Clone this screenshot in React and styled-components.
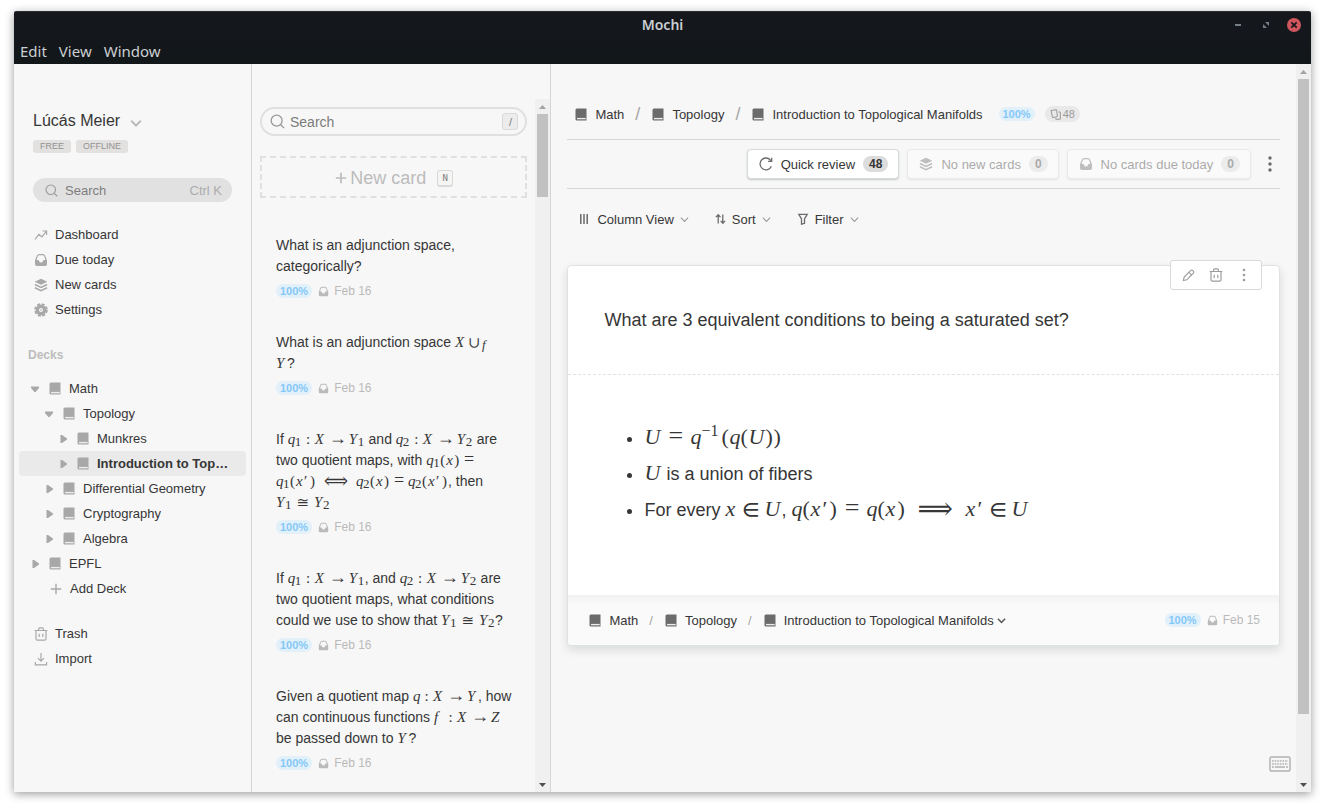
import React, { useState } from 'react';
import styled, { createGlobalStyle, css } from 'styled-components';

const color = {
	bg: '#f7f7f7',
	text: '#363636',
	icon: '#a8a8a8',
	iconDark: '#6b6b6b',
	muted: '#bababa',
	line: '#d6d6d6',
	badge: '#e1e1e1',
	blue: '#85c8f8',
	blueBg: '#e2f0fa',
};

/* ---------- icons ---------- */

const Svg = ({ size = 14, w, h, box = '0 0 14 14', children, ...rest }) => (
	<Icon
		width={w || size}
		height={h || size}
		viewBox={box}
		fill="none"
		stroke="currentColor"
		strokeWidth="1.2"
		aria-hidden="true"
		{...rest}
	>
		{children}
	</Icon>
);

const SearchIcon = ({ size }) => (
	<Svg size={size}>
		<circle cx="6.2" cy="6.2" r="5.1" />
		<path d="M10 10l3.2 3.2" />
	</Svg>
);

const ChevronIcon = ({ w = 9, weight = 1.2 }) => (
	<Svg w={w} h={w} box="0 0 10 10" strokeWidth={weight}>
		<path d="M1 3l4 4.2L9 3" />
	</Svg>
);

const TrendIcon = () => (
	<Svg>
		<path d="M1 11.4L5 6.4l2.9 2.4 4.6-5.6M8.6 3h4v4" />
	</Svg>
);

const InboxIcon = ({ size }) => (
	<Svg size={size} stroke="none" fill="currentColor">
		<path
			fillRule="evenodd"
			d="M1 7.2l1.9-4.7Q3.500 1 5.100 1h3.800q1.600 0 2.200 1.500L13 7.200v4.100q0 1.700-1.700 1.700H2.700Q1 13 1 11.300zM5 2.200q-.8 0-1.100.8L2.600 7h1.600q.6 0 .8.900.4 1.500 2 1.500t2-1.500q.2-.9.800-.9h1.600l-1.300-4q-.3-.8-1.100-.8z"
		/>
	</Svg>
);

const LayersIcon = () => (
	<Svg>
		<path d="M7 .8l6.3 3-6.3 3-6.3-3z" fill="currentColor" stroke="none" />
		<path d="M.9 6.500L7 9.400l6.100-2.900M.9 9.700L7 12.600l6.100-2.900" strokeWidth="1.5" />
	</Svg>
);

const GearIcon = () => (
	<Svg>
		<circle cx="7" cy="7" r="3.7" strokeWidth="3.4" />
		<circle cx="7" cy="7" r="6" strokeWidth="1.6" strokeDasharray="3.1 1.61" />
		<circle cx="7" cy="7" r=".8" fill="currentColor" stroke="none" />
	</Svg>
);

const BookIcon = () => (
	<Svg w={12} h={13} box="0 0 12 13" stroke="none">
		<path d="M2.500.5h9v12h-9C1.300 12.500.5 12 .5 11V2C.5 1 1.300.5 2.500.5z" fill="currentColor" />
		<path d="M2 9.900h8.700v1.400H2z" fill="#ececec" />
	</Svg>
);

const CaretIcon = ({ open }) => (
	<Svg w={10} h={10} box="0 0 10 10" stroke="none">
		<path
			d={open ? 'M1 2.500h8v1.500L5.600 8H4.400L1 4z' : 'M2.500 1H4l5 3.400v1.200L4 9H2.500z'}
			fill="currentColor"
		/>
	</Svg>
);

const PlusIcon = ({ size = 12, weight = 1.4 }) => (
	<Svg size={size} box="0 0 12 12" strokeWidth={weight}>
		<path d="M6 .8v10.400M.8 6h10.400" />
	</Svg>
);

const TrashIcon = ({ size }) => (
	<Svg size={size}>
		<path d="M.6 3.500h12.800M4.600 3.300V2.200c0-.8.500-1.300 1.200-1.300h2.400c.7 0 1.200.5 1.200 1.300v1.100M2 3.700v8c0 .9.500 1.500 1.400 1.500h7.200c.9 0 1.400-.6 1.400-1.500v-8" />
		<path d="M5.200 6.800V10M8.800 6.800V10" />
	</Svg>
);

const ImportIcon = () => (
	<Svg>
		<path d="M1.400 10v2.800h11.200V10M7 1v8M4 6.200l3 3 3-3" />
	</Svg>
);

const ReloadIcon = () => (
	<Svg strokeWidth="1.3">
		<path d="M12.400 9.200A5.900 5.900 0 1 1 11.800 3.500M12.700.8v3.500H9.100" />
	</Svg>
);

const ColumnsIcon = () => (
	<Svg w={12} h={12} box="0 0 12 12" strokeWidth="1.5">
		<path d="M1.800 1v10M5 1v10M8.200 1v10" />
	</Svg>
);

const SortIcon = () => (
	<Svg w={11} h={12} box="0 0 12 12" strokeWidth="1.4">
		<path d="M3.500 11V1.500M1 4l2.500-2.700L6 4M8.500 1v9.500M6.200 8l2.400 2.700L11 8" />
	</Svg>
);

const FilterIcon = () => (
	<Svg w={12} h={12} box="0 0 12 12" strokeWidth="1.3">
		<path d="M1.800 1.300h8.400L7.500 6v4.300l-3 .9V6z" />
	</Svg>
);

const PencilIcon = () => (
	<Svg size={13}>
		<path d="M1.500 12.500l.8-3.800 6.900-7c.8-.8 1.600-.8 2.400 0l.5.500c.8.8.8 1.600 0 2.400l-7 7.100zM7.500 3.700l2.700 2.700-2.200 2" />
	</Svg>
);

const DotsIcon = ({ h = 16, r = 1.7 }) => (
	<Svg w={6} h={h} box={`0 0 6 ${h}`} stroke="none" fill="currentColor">
		<circle cx="3" cy="2" r={r} />
		<circle cx="3" cy={h / 2} r={r} />
		<circle cx="3" cy={h - 2} r={r} />
	</Svg>
);

const CardsIcon = () => (
	<Svg w={11} h={11} box="0 0 12 12" strokeWidth="1.1">
		<path d="M1.200 1.700L6.500.9q.7 0 .8.6l.7 6.200q0 .7-.6.8l-4 .700q-.7 0-.8-.6zM9.200 3.200h1.500q.6 0 .6.6v6.800q0 .6-.6.6H7q-.6 0-.6-.6v-.8" />
	</Svg>
);

const KeyboardIcon = () => (
	<Svg w={22} h={16} box="0 0 22 16" strokeWidth="1.5">
		<rect x="1" y="1" width="20" height="14" rx="1.8" />
		<path d="M3 5h16M3 8h16" strokeDasharray="1.7 .9" />
		<path d="M3 11h2M6 11h10M17 11h2" />
	</Svg>
);

/* ---------- math ---------- */

const advance = {
	sm: { q: 7, x: 8, f: 10, X: 12, Y: 9, Z: 10, ':': 13, '=': 18, '→': 22, '≅': 22, '∪': 15, '⟺': 40, '(': 6, ')': 6, '′': 6, '_': 7 },
	lg: { q: 11, x: 12, U: 17, '=': 29, '∈': 27, '⟹': 60, '(': 8, ')': 8, '′': 7, '^': 20 },
};
const relations = [':', '=', '→', '≅', '∪', '∈', '⟺', '⟹'];
const longRelations = ['=', '→', '⟺', '⟹'];

const Formula = ({ size = 'sm', tex }) => {
	const tokens = tex.split(' ');
	return (
		<Math $size={size}>
			{tokens.map((token, i) => {
				const script = token.length > 1 && (token[0] === '_' || token[0] === '^');
				if (script) {
					return (
						<Script key={i} $size={size} $up={token[0] === '^'} $w={advance[size][token[0]]}>
							{/[a-z]/.test(token[1]) ? <i>{token.slice(1)}</i> : token.slice(1)}
						</Script>
					);
				}
				const Part = longRelations.includes(token) ? LongGlyph : Glyph;
				const alone = token === 'Y' && !(tokens[i + 1] || '').startsWith('_');
				return (
					<Part
						key={i}
						$size={size}
						$w={advance[size][token] + (alone ? 2 : 0)}
						$italic={/[a-z]/i.test(token)}
						$center={relations.includes(token)}
					>
						{token}
					</Part>
				);
			})}
		</Math>
	);
};

/* ---------- shared parts ---------- */

const DueMeta = ({ date }) => (
	<Meta>
		<Percent>100%</Percent>
		<InboxIcon size={11} />
		<span>{date}</span>
	</Meta>
);

const Crumbs = ({ small, children }) => (
	<CrumbNav aria-label={small ? 'Card deck' : 'Deck'}>
		{['Math', 'Topology', 'Introduction to Topological Manifolds'].map((name, i) => (
			<React.Fragment key={name}>
				{i > 0 && <Slash $small={small}>/</Slash>}
				<Crumb href="#">
					<BookIcon />
					<span>{name}</span>
				</Crumb>
			</React.Fragment>
		))}
		{children}
	</CrumbNav>
);

const ScrollBar = ({ size }) => (
	<Track>
		<Arrow aria-label="Scroll up">
			<Svg w={7} h={4} box="0 0 7 4" stroke="none" fill="#a3a3a3">
				<path d="M0 4L3.500 0 7 4z" />
			</Svg>
		</Arrow>
		<Rail>
			<Thumb $size={size} />
		</Rail>
		<Arrow aria-label="Scroll down">
			<Svg w={7} h={4} box="0 0 7 4" stroke="none" fill="#505050">
				<path d="M0 0h7L3.500 4z" />
			</Svg>
		</Arrow>
	</Track>
);

/* ---------- data ---------- */

const links = [
	{ label: 'Dashboard', icon: <TrendIcon /> },
	{ label: 'Due today', icon: <InboxIcon /> },
	{ label: 'New cards', icon: <LayersIcon /> },
	{ label: 'Settings', icon: <GearIcon /> },
];

const decks = [
	{ name: 'Math', level: 0, open: true },
	{ name: 'Topology', level: 1, open: true },
	{ name: 'Munkres', level: 2 },
	{ name: 'Introduction to Topological Manifolds', level: 2 },
	{ name: 'Differential Geometry', level: 1 },
	{ name: 'Cryptography', level: 1 },
	{ name: 'Algebra', level: 1 },
	{ name: 'EPFL', level: 0 },
];

const cards = [
	<>
		What is an adjunction space,
		<br />
		categorically?
	</>,
	<>
		What is an adjunction space <Formula tex="X ∪ _f" />
		<br />
		<Formula tex="Y" />?
	</>,
	<>
		If <Formula tex="q _1 : X → Y _1" /> and <Formula tex="q _2 : X → Y _2" /> are
		<br />
		two quotient maps, with <Formula tex="q _1 ( x ) =" />
		<br />
		<Formula tex="q _1 ( x ′ ) ⟺ q _2 ( x ) = q _2 ( x ′ )" />, then
		<br />
		<Formula tex="Y _1 ≅ Y _2" />
	</>,
	<>
		If <Formula tex="q _1 : X → Y _1" />, and <Formula tex="q _2 : X → Y _2" /> are
		<br />
		two quotient maps, what conditions
		<br />
		could we use to show that <Formula tex="Y _1 ≅ Y _2" />?
	</>,
	<>
		Given a quotient map <Formula tex="q : X → Y" />, how
		<br />
		can continuous functions <Formula tex="f : X → Z" />
		<br />
		be passed down to <Formula tex="Y" />?
	</>,
];

/* ---------- page ---------- */

const Sidebar = () => {
	const [active, setActive] = useState('Introduction to Topological Manifolds');

	return (
		<Side>
			<Profile>
				<UserButton>
					Lúcás Meier
					<ChevronIcon w={12} weight={1.7} />
				</UserButton>
				<Tags>
					<Tag>FREE</Tag>
					<Tag>OFFLINE</Tag>
				</Tags>
				<QuickSearch>
					<SearchIcon size={13} />
					<span>Search</span>
					<kbd>Ctrl K</kbd>
				</QuickSearch>
			</Profile>

			<Menu>
				{links.map(({ label, icon }) => (
					<MenuLink key={label} href="#">
						{icon}
						{label}
					</MenuLink>
				))}
			</Menu>

			<DecksTitle>Decks</DecksTitle>
			<nav aria-label="Decks">
				{decks.map(({ name, level, open }) => (
					<DeckRow
						key={name}
						href="#"
						$level={level}
						$active={name === active}
						onClick={() => setActive(name)}
					>
						<CaretIcon open={open} />
						<BookIcon />
						<span>{name}</span>
					</DeckRow>
				))}
				<AddDeck>
					<PlusIcon />
					Add Deck
				</AddDeck>
			</nav>

			<Menu>
				<MenuLink href="#">
					<TrashIcon />
					Trash
				</MenuLink>
				<MenuLink href="#">
					<ImportIcon />
					Import
				</MenuLink>
			</Menu>
		</Side>
	);
};

const CardList = () => (
	<ListPane>
		<ListScroll>
			<SearchBox>
				<SearchIcon size={15} />
				<input type="search" placeholder="Search" aria-label="Search cards" />
				<Key>/</Key>
			</SearchBox>
			<NewCard>
				<PlusIcon size={12} weight={1.7} />
				<span>New card</span>
				<Key $mono>N</Key>
			</NewCard>
			<Cards>
				{cards.map((text, i) => (
					<CardItem key={i}>
						<p>{text}</p>
						<DueMeta date="Feb 16" />
					</CardItem>
				))}
			</Cards>
		</ListScroll>
		<ScrollBar size={12.5} />
	</ListPane>
);

const DeckView = () => (
	<Main>
		<Content>
			<Header>
				<Crumbs>
					<Percent>100%</Percent>
					<Total>
						<CardsIcon />
						48
					</Total>
				</Crumbs>
			</Header>

			<Actions>
				<Action>
					<ReloadIcon />
					Quick review
					<Count>48</Count>
				</Action>
				<Action disabled>
					<LayersIcon />
					No new cards
					<Count>0</Count>
				</Action>
				<Action disabled>
					<InboxIcon />
					No cards due today
					<Count>0</Count>
				</Action>
				<More aria-label="More actions">
					<DotsIcon />
				</More>
			</Actions>

			<Options>
				<Option>
					<ColumnsIcon />
					Column View
					<ChevronIcon />
				</Option>
				<Option>
					<SortIcon />
					Sort
					<ChevronIcon />
				</Option>
				<Option>
					<FilterIcon />
					Filter
					<ChevronIcon />
				</Option>
			</Options>

			<Sheet>
				<Tools>
					<button type="button" aria-label="Edit card">
						<PencilIcon />
					</button>
					<button type="button" aria-label="Delete card">
						<TrashIcon size={14} />
					</button>
					<button type="button" aria-label="Card menu">
						<DotsIcon h={14} r={1.3} />
					</button>
				</Tools>
				<Question>What are 3 equivalent conditions to being a saturated set?</Question>
				<Answer>
					<li>
						<Formula size="lg" tex="U = q ^−1 ( q ( U ) )" />
					</li>
					<li>
						<Formula size="lg" tex="U" /> is a union of fibers
					</li>
					<li>
						For every <Formula size="lg" tex="x ∈ U" />,{' '}
						<Formula size="lg" tex="q ( x ′ ) = q ( x ) ⟹ x ′ ∈ U" />
					</li>
				</Answer>
				<SheetFooter>
					<Crumbs small>
						<FooterChevron aria-label="Move card">
							<ChevronIcon weight={1.6} />
						</FooterChevron>
					</Crumbs>
					<DueMeta date="Feb 15" />
				</SheetFooter>
			</Sheet>
			<Shortcuts aria-label="Keyboard shortcuts">
				<KeyboardIcon />
			</Shortcuts>
		</Content>
		<ScrollBar size={91} />
	</Main>
);

const App = () => (
	<Desktop>
		<GlobalStyle />
		<Frame>
			<TitleBar>
				<TitleRow>
					<h1>Mochi</h1>
					<Controls>
						<button type="button" aria-label="Minimize">
							<Svg w={6} h={14} box="0 0 6 14" stroke="#767e86" strokeWidth="2">
								<path d="M0 7h6" />
							</Svg>
						</button>
						<button type="button" aria-label="Restore">
							<Svg w={6} h={6} box="0 0 6 6" stroke="none" fill="#767e86">
								<path d="M2 0h4v4zM0 2v4h4z" />
							</Svg>
						</button>
						<button type="button" aria-label="Close">
							<Svg stroke="none">
								<circle cx="7" cy="7" r="7" fill="#d0565d" />
								<path d="M4.300 4.300l5.400 5.400M9.700 4.300l-5.400 5.400" stroke="#15171c" strokeWidth="1.7" />
							</Svg>
						</button>
					</Controls>
				</TitleRow>
				<MenuBar>
					<button type="button">Edit</button>
					<button type="button">View</button>
					<button type="button">Window</button>
				</MenuBar>
			</TitleBar>
			<Body>
				<Sidebar />
				<CardList />
				<DeckView />
			</Body>
		</Frame>
	</Desktop>
);

export default App;

const GlobalStyle = createGlobalStyle`
	* {
		box-sizing: border-box;
	}

	body {
		margin: 0;
		background: #fff;
		color: ${color.text};
		font: 13px/15px 'Liberation Sans', Arial, sans-serif;
	}

	button {
		padding: 0;
		border: 0;
		background: none;
		color: inherit;
		font: inherit;
		cursor: pointer;
	}

	a {
		color: inherit;
		text-decoration: none;
	}

	kbd {
		font: inherit;
	}
`;

const Icon = styled.svg`
	display: block;
	flex: none;
`;

const Desktop = styled.div`
	display: flex;
	height: 100vh;
	padding: 11px 14px 17px;
`;

const Frame = styled.div`
	display: flex;
	flex: 1;
	flex-direction: column;
	min-width: 0;
	border-radius: 2px 2px 0 0;
	background: ${color.bg};
	box-shadow: 0 2px 10px rgba(0, 0, 0, 0.4);
`;

const TitleBar = styled.header`
	padding-top: 3px;
	border-top: 1px solid #2a2d33;
	border-radius: 2px 2px 0 0;
	background: linear-gradient(#15171c, #12171a);
	color: #cbcfd3;
	font-family: 'Noto Sans', sans-serif;
`;

const TitleRow = styled.div`
	display: grid;
	grid-template-columns: 1fr auto 1fr;
	align-items: center;
	height: 20px;

	h1 {
		grid-column: 2;
		margin: 0;
		font-size: 14px;
		line-height: 20px;
		font-weight: 600;
	}
`;

const Controls = styled.div`
	display: flex;
	justify-content: flex-end;
	padding-right: 6px;

	button {
		display: grid;
		place-items: center;
		width: 22px;
		height: 20px;
		margin-left: 6px;
	}
`;

const MenuBar = styled.nav`
	display: flex;
	gap: 12px;
	height: 29px;
	padding: 3px 6px 0;
	font-size: 15px;
	line-height: 26px;
`;

const Body = styled.div`
	display: flex;
	flex: 1;
	min-height: 0;
`;

/* sidebar */

const Side = styled.aside`
	flex: 0 0 238px;
	min-width: 0;
	padding: 47px 5px 0;
	overflow: hidden;
	border-right: 1px solid ${color.line};
`;

const Profile = styled.div`
	padding: 0 14px;
`;

const UserButton = styled.button`
	display: flex;
	align-items: center;
	gap: 10px;
	font-size: 16px;
	line-height: 20px;

	svg {
		margin-top: 3px;
		color: #b8b8b8;
	}
`;

const Tags = styled.div`
	display: flex;
	gap: 5px;
	margin-top: 9px;
`;

const Tag = styled.span`
	padding: 0 7px;
	border-radius: 3px;
	background: #e2e1e0;
	color: #929292;
	font-size: 9px;
	line-height: 13px;
`;

const QuickSearch = styled.button`
	display: flex;
	align-items: center;
	width: 100%;
	height: 24px;
	margin-top: 25px;
	padding: 0 10px 0 12px;
	border-radius: 12px;
	background: ${color.badge};
	color: #7d7d7d;

	svg {
		color: #9a9a9a;
	}

	span {
		margin-left: 7px;
	}

	kbd {
		margin-left: auto;
		color: #acacac;
	}
`;

const Menu = styled.nav`
	margin-top: 20px;
	padding-left: 15px;
`;

const row = css`
	display: flex;
	align-items: center;
	height: 25px;

	svg {
		color: ${color.icon};
	}
`;

const MenuLink = styled.a`
	${row}
	gap: 7px;
`;

const DecksTitle = styled.h2`
	margin: 25px 0 13px;
	padding-left: 9px;
	color: #bdbdbd;
	font-size: 12px;
	line-height: 16px;
`;

const DeckRow = styled.a`
	${row}
	padding: 0 12px 0 ${({ $level }) => 11 + $level * 14}px;
	border-radius: 4px;
	background: ${({ $active }) => ($active ? '#eaeaea' : 'none')};
	font-weight: ${({ $active }) => ($active ? 'bold' : 'normal')};

	svg + svg {
		margin: 0 8px 0 9px;
	}

	span {
		overflow: hidden;
		text-overflow: ellipsis;
		white-space: nowrap;
	}
`;

const AddDeck = styled.button`
	${row}
	gap: 8px;
	padding-left: 31px;
`;

/* card list */

const ListPane = styled.section`
	display: flex;
	flex: 0 0 299px;
	padding-top: 35px;
	border-right: 1px solid ${color.line};
`;

const ListScroll = styled.div`
	flex: 1;
	min-width: 0;
	padding: 8px 8px 0;
	overflow: hidden;
`;

const SearchBox = styled.label`
	display: flex;
	align-items: center;
	height: 29px;
	padding: 0 7px 0 8px;
	border: 2px solid #e0e0e0;
	border-radius: 15px;
	color: #999;

	input {
		flex: 1;
		min-width: 0;
		padding: 0 5px;
		border: 0;
		outline: 0;
		background: none;
		color: ${color.text};
		font: 14px/20px 'Liberation Sans', Arial, sans-serif;
	}

	input::placeholder {
		color: #7b7b7b;
		opacity: 1;
	}
`;

const Key = styled.kbd`
	display: grid;
	place-items: center;
	width: 16px;
	height: 17px;
	border: 1px solid #dadada;
	border-bottom-width: ${({ $mono }) => ($mono ? 2 : 1)}px;
	border-radius: 3px;
	background: ${({ $mono }) => ($mono ? '#f5f5f4' : '#ececec')};
	color: #7d7d7d;
	font-family: ${({ $mono }) => ($mono ? "'DejaVu Sans Mono', monospace" : 'inherit')};
	font-size: ${({ $mono }) => ($mono ? 9 : 11)}px;
	line-height: 12px;
`;

const NewCard = styled.button`
	display: flex;
	align-items: center;
	justify-content: center;
	width: 100%;
	height: 42px;
	margin-top: 20px;
	padding: 2px 0 0 1px;
	border: 2px dashed #e0e0e0;
	color: #bcbcbc;
	font-size: 18px;
	line-height: 20px;

	span {
		margin: 0 11px 0 3px;
	}
`;

const Cards = styled.div`
	display: grid;
	margin-top: 21px;
`;

const CardItem = styled.article`
	padding: 16px;

	p {
		margin: 0;
		font-size: 14px;
		line-height: 21px;
		white-space: nowrap;
	}

	p + div {
		margin-top: 5px;
	}
`;

const Meta = styled.div`
	display: flex;
	align-items: center;
	height: 18px;
	color: ${color.muted};
	font-size: 12px;

	svg {
		margin: 0 5px 0 6px;
	}
`;

const Percent = styled.span`
	padding: 0 4px;
	border-radius: 7px;
	background: ${color.blueBg};
	color: ${color.blue};
	font-size: 11px;
	font-weight: bold;
	line-height: 14px;
`;

const Math = styled.span`
	font-family: 'Liberation Serif', 'DejaVu Math TeX Gyre', 'DejaVu Sans', serif;
	font-size: ${({ $size }) => ($size === 'lg' ? 22 : 15)}px;
	line-height: 1;
	white-space: nowrap;
`;

const Glyph = styled.span`
	display: inline-block;
	width: ${({ $w }) => $w}px;
	font-style: ${({ $italic }) => ($italic ? 'italic' : 'normal')};
	text-align: ${({ $center }) => ($center ? 'center' : 'left')};
`;

const LongGlyph = styled(Glyph)`
	font-size: ${({ $size }) => ($size === 'lg' ? 26 : 18)}px;
	line-height: 0;
`;

const Script = styled.span`
	display: inline-block;
	width: ${({ $w }) => $w}px;
	font-size: ${({ $size }) => ($size === 'lg' ? 16 : 13)}px;
	line-height: 0;
	vertical-align: ${({ $up }) => ($up ? 8 : -2)}px;
`;

/* deck view */

const Main = styled.main`
	display: flex;
	flex: 1;
	min-width: 0;
`;

const Content = styled.div`
	position: relative;
	flex: 1;
	min-width: 0;
	padding: 25px 16px 0;
	overflow: hidden;
`;

const Header = styled.div`
	display: flex;
	align-items: center;
	height: 51px;
	padding-left: 8px;
	border-bottom: 1px solid ${color.line};

	nav > a + ${Percent} {
		margin-left: 16px;
	}
`;

const CrumbNav = styled.nav`
	display: flex;
	align-items: center;
	min-width: 0;
`;

const Crumb = styled.a`
	display: flex;
	align-items: center;
	gap: 8px;
	white-space: nowrap;

	svg {
		color: ${color.iconDark};
	}
`;

const Slash = styled.span`
	margin: 0 12px 0 11px;
	color: #a5a5a5;
	font-size: ${({ $small }) => ($small ? 13 : 18)}px;
`;

const Total = styled.span`
	display: flex;
	align-items: center;
	gap: 2px;
	height: 16px;
	margin-left: 10px;
	padding: 0 5px;
	border-radius: 8px;
	background: #e9e9e9;
	color: #9b9b9b;
	font-size: 11px;
`;

const Actions = styled.div`
	display: flex;
	align-items: center;
	justify-content: flex-end;
	gap: 8px;
	height: 49px;
	border-bottom: 1px solid ${color.line};
`;

const Action = styled.button`
	display: flex;
	align-items: center;
	height: 30px;
	padding: 0 10px 0 11px;
	border: 1px solid #d5dada;
	border-radius: 4px;
	background: #fff;
	box-shadow: 0 1px 2px rgba(0, 20, 20, 0.2);
	white-space: nowrap;

	svg {
		margin-right: 8px;
		color: ${color.iconDark};
	}

	&:disabled {
		opacity: 0.4;
		cursor: default;
	}
`;

const Count = styled.span`
	margin-left: 8px;
	padding: 0 6px;
	border-radius: 8px;
	background: #dcdcdc;
	font-size: 12px;
	font-weight: bold;
	line-height: 16px;
`;

const More = styled.button`
	display: grid;
	place-items: center;
	width: 21px;
	height: 30px;
	color: ${color.iconDark};
`;

const Options = styled.div`
	display: flex;
	gap: 26px;
	height: 60px;
	padding-left: 12px;
`;

const Option = styled.button`
	display: flex;
	align-items: center;
	gap: 6px;
	color: ${color.text};

	svg:first-child {
		color: ${color.iconDark};
	}

	svg:last-child {
		color: #9a9a9a;
	}
`;

const Sheet = styled.article`
	position: relative;
	margin-top: 16px;
	border: 1px solid #dfe2e2;
	border-radius: 4px;
	background: #fff;
	box-shadow: 0 4px 10px rgba(0, 20, 20, 0.12);
`;

const Tools = styled.div`
	position: absolute;
	top: -6px;
	right: 17px;
	display: flex;
	justify-content: center;
	width: 92px;
	height: 30px;
	border: 1px solid #d8dada;
	border-radius: 3px;
	background: #fff;
	color: #9c9c9c;

	button {
		display: grid;
		place-items: center;
		width: 28px;
	}
`;

const Question = styled.h2`
	margin: 0;
	padding: 36px;
	border-bottom: 1px dashed #e2e2e2;
	font-size: 18px;
	font-weight: normal;
	line-height: 36px;
`;

const Answer = styled.ul`
	margin: 0;
	padding: 45px 36px 67px 76px;
	font-size: 18px;
	line-height: 36px;

	li {
		height: 36px;
	}
`;

const SheetFooter = styled.footer`
	display: flex;
	align-items: center;
	justify-content: space-between;
	height: 50px;
	padding: 0 19px 0 21px;
	border-radius: 0 0 4px 4px;
	background: linear-gradient(#f1f1f1, #fafafa 10px);
`;

const FooterChevron = styled.button`
	margin-left: 3px;
	color: #555;
`;

const Shortcuts = styled.button`
	position: absolute;
	right: 5px;
	bottom: 20px;
	color: #b3b3b3;
`;

/* scroll bars */

const Track = styled.div`
	display: flex;
	flex: none;
	flex-direction: column;
	width: 15px;
	background: #f0f0f0;
`;

const Arrow = styled.button`
	display: grid;
	place-items: center;
	height: 15px;
`;

const Rail = styled.div`
	flex: 1;
	padding: 0 2px;
`;

const Thumb = styled.div`
	height: ${({ $size }) => $size}%;
	background: #c1c1c1;
`;
